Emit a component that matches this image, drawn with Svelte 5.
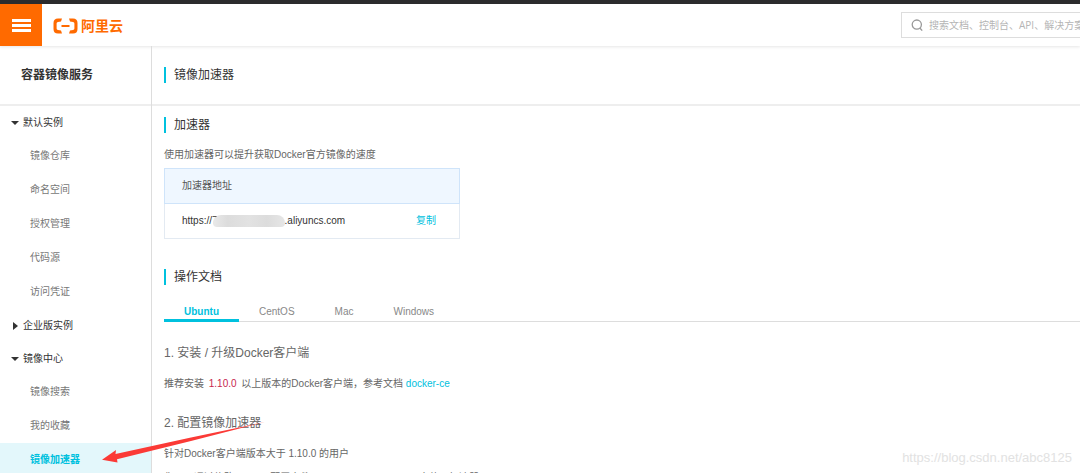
<script>
  // Sidebar navigation, grouped by section
  const groups = [
    { label: '默认实例', open: true, items: ['镜像仓库', '命名空间', '授权管理', '代码源', '访问凭证'] },
    { label: '企业版实例', open: false, items: [] },
    { label: '镜像中心', open: true, items: ['镜像搜索', '我的收藏', '镜像加速器'] }
  ];
  const tabs = ['Ubuntu', 'CentOS', 'Mac', 'Windows'];

  let current = $state('镜像加速器');
  let activeTab = $state('Ubuntu');
</script>

<div class="page">
  <header class="topbar">
    <button class="menu" aria-label="菜单">
      <span></span>
      <span></span>
      <span></span>
    </button>
    <a class="brand" href="#home">
      <svg width="25" height="16" viewBox="0 0 25 16" aria-hidden="true">
        <path
          d="M9 0.5H5Q0.5 0.5 0.5 5V11Q0.5 15.5 5 15.5H9L8 12.6L5 12Q3.6 11.6 3.6 10.4V5.6Q3.6 4.4 5 4L8 3.4ZM16 0.5H20Q24.5 0.5 24.5 5V11Q24.5 15.5 20 15.5H16L17 12.6L20 12Q21.4 11.6 21.4 10.4V5.6Q21.4 4.4 20 4L17 3.4ZM8.5 7.1H16.5V8.9H8.5Z"
          fill="#ff6a00"
        />
      </svg>
      <span>阿里云</span>
    </a>
    <label class="search">
      <svg width="13" height="13" viewBox="0 0 13 13" aria-hidden="true">
        <circle cx="5.8" cy="5.6" r="4.6" fill="none" stroke="#999" stroke-width="1.3" />
        <path d="M8.8 9L11.2 11.6" stroke="#999" stroke-width="1.4" />
      </svg>
      <input type="text" aria-label="搜索" placeholder="搜索文档、控制台、API、解决方案和资源" />
    </label>
  </header>

  <div class="body">
    <aside class="sidebar">
      <div class="service">容器镜像服务</div>
      <nav>
        {#each groups as group}
          <button class="group">
            <i class="caret" class:open={group.open}></i>{group.label}
          </button>
          {#each group.items as item}
            <a class="item" class:active={item === current} href="#{item}" onclick={() => (current = item)}>{item}</a>
          {/each}
        {/each}
      </nav>
    </aside>

    <main>
      <div class="page-title">
        <h1 class="heading">镜像加速器</h1>
      </div>

      <section class="accelerator">
        <h2 class="heading">加速器</h2>
        <p>使用加速器可以提升获取Docker官方镜像的速度</p>
        <table>
          <thead>
            <tr><th colspan="2">加速器地址</th></tr>
          </thead>
          <tbody>
            <tr>
              <td>https://7<span class="mask"></span>.aliyuncs.com</td>
              <td class="action"><button>复制</button></td>
            </tr>
          </tbody>
        </table>
      </section>

      <section class="docs">
        <h2 class="heading">操作文档</h2>
        <div class="tabs" role="tablist">
          {#each tabs as tab}
            <button role="tab" aria-selected={tab === activeTab} class:active={tab === activeTab} onclick={() => (activeTab = tab)}>{tab}</button>
          {/each}
        </div>

        <h3>1. 安装 / 升级Docker客户端</h3>
        <p>推荐安装 <code>1.10.0</code> 以上版本的Docker客户端，参考文档 <a href="#docker-ce">docker-ce</a></p>

        <h3>2. 配置镜像加速器</h3>
        <p>针对Docker客户端版本大于 1.10.0 的用户</p>
        <p>您可以通过修改daemon配置文件/etc/docker/daemon.json来使用加速器</p>
      </section>
    </main>
  </div>

  <svg class="arrow" width="168" height="48" viewBox="0 0 168 48" aria-hidden="true">
    <path d="M1 43.7L15 34L14.5 38L90 21.5L164 6L90 25L16 43.2L16.5 46.5Z" fill="#fb3a36" />
  </svg>
  <div class="watermark">https://blog.csdn.net/abc8125</div>
</div>

<style>
  :global(body) {
    margin: 0;
  }

  .page {
    position: relative;
    display: flex;
    flex-direction: column;
    height: 100vh;
    box-sizing: border-box;
    border-top: 4px solid #2b2b2d;
    overflow: hidden;
    background: #fff;
    color: #666;
    font: 10px/16px 'Liberation Sans', 'Noto Sans CJK SC', sans-serif;
  }

  button {
    border: 0;
    padding: 0;
    background: none;
    font: inherit;
    color: inherit;
    cursor: pointer;
  }

  a {
    color: #00c1de;
    text-decoration: none;
  }

  h1,
  h2,
  h3,
  p {
    margin: 0;
    font-weight: normal;
  }

  /* Top bar */
  .topbar {
    display: flex;
    align-items: center;
    flex: none;
    height: 42px;
    box-shadow: 0 1px 3px rgba(0, 0, 0, 0.1);
  }

  .menu {
    display: flex;
    flex-direction: column;
    justify-content: center;
    align-items: center;
    gap: 2px;
    width: 42px;
    height: 42px;
    background: #ff6a00;
  }

  .menu span {
    width: 19px;
    height: 3px;
    background: #fff;
  }

  .brand {
    display: flex;
    align-items: center;
    gap: 3px;
    padding-top: 2px;
    margin-left: 11px;
    color: #ff6a00;
    font-size: 14px;
    font-weight: bold;
  }

  .search {
    display: flex;
    align-items: center;
    gap: 5px;
    box-sizing: border-box;
    width: 179px;
    height: 26px;
    margin-left: auto;
    padding-left: 9px;
    border: 1px solid #ddd;
    border-right: 0;
  }

  .search svg {
    flex: none;
  }

  .search input {
    flex: 1;
    min-width: 0;
    padding: 0;
    border: 0;
    outline: 0;
    font: 10px/16px 'Open Sans', 'Noto Sans CJK SC', sans-serif;
  }

  .search input::placeholder {
    color: #b5b5b5;
  }

  .body {
    display: flex;
    flex: 1;
    min-height: 0;
  }

  /* Sidebar */
  .sidebar {
    flex: none;
    width: 151px;
    border-right: 1px solid #ddd;
  }

  .service,
  .page-title {
    display: flex;
    align-items: center;
    height: 58px;
    border-bottom: 2px solid #eee;
  }

  .service {
    padding-left: 21px;
    color: #333;
    font-size: 12px;
    font-weight: bold;
  }

  nav {
    display: flex;
    flex-direction: column;
  }

  .group {
    display: flex;
    align-items: center;
    height: 33px;
    padding-left: 11px;
    color: #333;
  }

  .caret {
    display: flex;
    width: 12px;
  }

  .caret::before {
    content: '';
    margin-left: 2px;
    border: 4px solid transparent;
    border-left: 5px solid #333;
    border-right: 0;
  }

  .caret.open::before {
    margin-left: 0;
    border: 4px solid transparent;
    border-top: 4px solid #333;
    border-bottom: 0;
  }

  .item {
    height: 34px;
    padding-left: 30px;
    color: #777;
    line-height: 34px;
  }

  .item.active {
    background: #e3f7fb;
    color: #00c1de;
    font-weight: bold;
  }

  /* Main column */
  main {
    flex: 1;
    min-width: 0;
  }

  .page-title,
  section {
    padding-left: 12px;
  }

  .heading {
    padding-left: 8px;
    border-left: 2px solid #00c1de;
    color: #333;
    font-size: 12px;
    line-height: 16px;
  }

  .accelerator {
    padding-top: 11px;
  }

  .accelerator p {
    margin: 14px 0 5px;
  }

  table {
    width: 296px;
    border: 1px solid #e3eaf2;
    border-collapse: collapse;
    color: #333;
  }

  thead {
    border: 1px solid #cfe4fa;
    background: #eff7ff;
  }

  th,
  td {
    height: 34px;
    padding: 0 0 0 17px;
    text-align: left;
  }

  th {
    color: #555;
    font-weight: normal;
  }

  .action {
    padding: 0 23px 0 0;
    color: #00c1de;
    text-align: right;
  }

  /* Hides the private part of the address */
  .mask {
    display: inline-block;
    width: 72px;
    height: 12px;
    margin-left: -5px;
    border-radius: 8px 8px 4px 4px;
    background: linear-gradient(90deg, #e9e9e9, #dcdcdc 20%, #e2e2e2 50%, #dcdcdc 75%, #e6e6e6);
    vertical-align: -3px;
  }

  .docs {
    padding-top: 30px;
  }

  .tabs {
    display: flex;
    margin-top: 16px;
    border-bottom: 1px solid #ddd;
  }

  .tabs button {
    box-sizing: border-box;
    height: 21px;
    margin-bottom: -1px;
    padding: 3px 20px 0;
    border-bottom: 3px solid transparent;
    color: #888;
    line-height: 15px;
  }

  .tabs button.active {
    border-color: #00c1de;
    color: #00c1de;
    font-weight: bold;
  }

  h3 {
    margin-top: 23px;
    font-size: 12px;
  }

  .docs p {
    margin-top: 15px;
  }

  .docs p + p {
    margin-top: 8px;
  }

  code {
    padding: 0 2px;
    color: #c7254e;
    font: inherit;
  }

  /* Pointer to the selected menu entry */
  .arrow {
    position: absolute;
    top: 412px;
    left: 101px;
    pointer-events: none;
  }

  .watermark {
    position: absolute;
    right: 8px;
    bottom: 7px;
    color: #e2e2e2;
    font-size: 13px;
  }
</style>
